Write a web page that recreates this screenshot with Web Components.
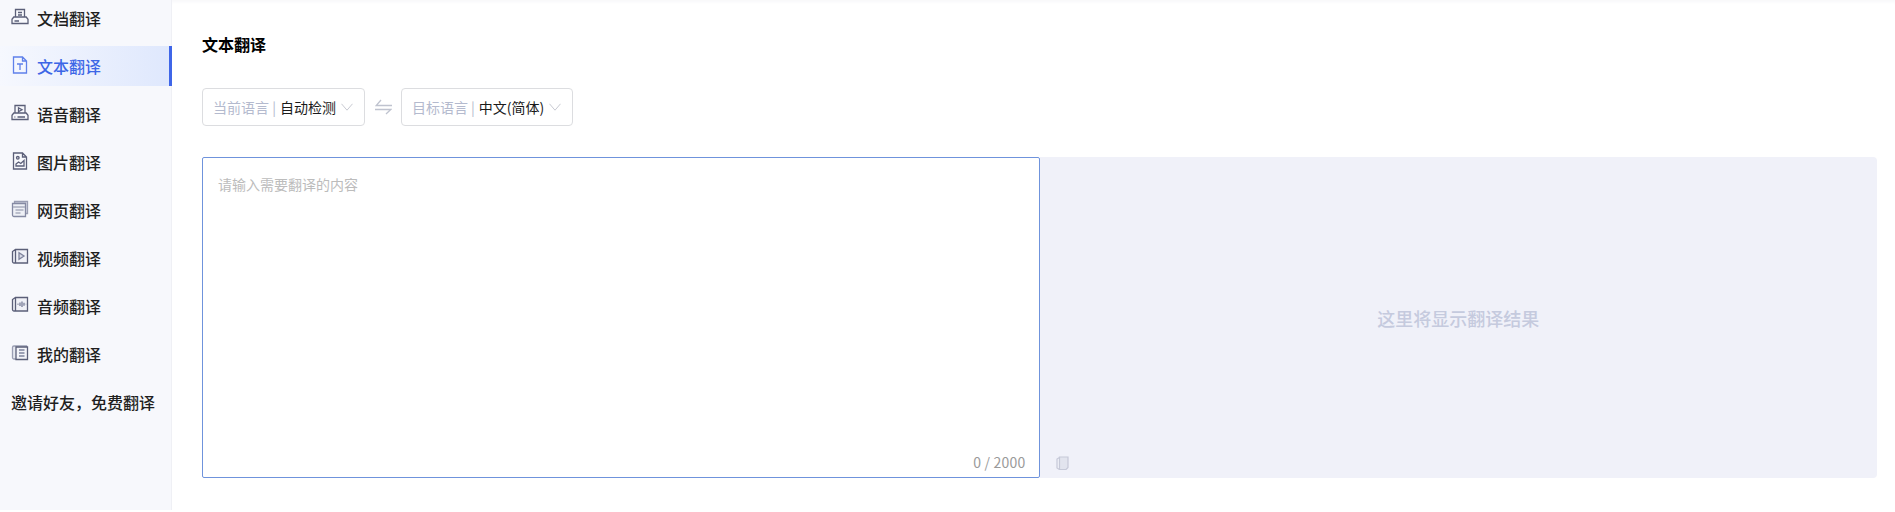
<!DOCTYPE html>
<html lang="zh-CN">
<head>
<meta charset="UTF-8">
<title>文本翻译</title>
<style>
    html, body { margin: 0; height: 100%; overflow: hidden; }
    body { font-family: "Noto Sans CJK SC", "Noto Sans", sans-serif; background: #fff; }
</style>
</head>
<body>
<translate-app>
    <side-menu slot="side">
        <menu-item icon="doc">文档翻译</menu-item>
        <menu-item icon="text" active>文本翻译</menu-item>
        <menu-item icon="audio">语音翻译</menu-item>
        <menu-item icon="image">图片翻译</menu-item>
        <menu-item icon="web">网页翻译</menu-item>
        <menu-item icon="video">视频翻译</menu-item>
        <menu-item icon="sound">音频翻译</menu-item>
        <menu-item icon="mine">我的翻译</menu-item>
        <menu-item>邀请好友，免费翻译</menu-item>
    </side-menu>
    <text-translate slot="main"></text-translate>
</translate-app>

<script>
    const ICONS = {
        doc: '<path d="M4.5 9V1.5h9V9M7 4.5h4M7 7h4M1 15.5v-4.2L2.8 9h12.4l1.8 2.3v4.2zM3.5 13H8"/>',
        text: '<path d="M2.5 1h9L15.5 5v12h-13zM11.5 1v4h4M6 8h6M9 8v6" />',
        audio: '<path d="M4 9V1.5h10V9M7.5 3.8v3.9l3.5-2zM1 15.5v-4.2L2.8 9h12.4l1.8 2.3v4.2zM3.5 13h.8M6.5 13H14"/>',
        image: '<path d="M2.5 1h9L15.5 5v12h-13zM11.5 1v4h4M5 14h8V8.5l-3.2 3-2.2-1.5L5 12z"/><circle cx="6.8" cy="5.8" r="1.3"/>',
        web: '<path fill="#e3e5ee" stroke="#9a9eb3" d="M3.5 1.5h13v12h-2V3.5h-11z"/><path fill="#eef0f6" stroke="#858aa3" d="M1.5 3.5h13v13H3a1.5 1.5 0 0 1-1.5-1.5z"/><path stroke="#a9adbe" d="M2 7h12M4.5 10h8M4.5 13h5"/>',
        video: '<path fill="#f0f1f7" d="M4.5 1.5h12v13.5H3A1.5 1.5 0 0 1 1.5 13.5V3.5L4.5 1.5zM4.5 1.5V15"/><path fill="#d9dbe6" stroke="#7f849d" d="M8 4.8v6.4l5-3.2z"/>',
        sound: '<path fill="#f0f1f7" d="M4.5 1.5h12v13.5H3A1.5 1.5 0 0 1 1.5 13.5V3.5L4.5 1.5zM4.5 1.5V15"/><path stroke-width="1.4" stroke="#7f849d" d="M6.5 8.3h1M9 6.5v3.6M11 5.5v5.6M13 6.8v3M14.8 8.3h.4"/>',
        mine: '<path fill="#e6e8f0" stroke="#9a9eb3" d="M3 2h12.5v13H3A1.5 1.5 0 0 1 1.5 13.5v-10A1.5 1.5 0 0 1 3 2z"/><path fill="#f3f4f9" d="M5 3h11.5v12.5H5z"/><path stroke="#7f849d" d="M8 6h5.5M8 9h5.5M8 12h5.5"/>'
    };

    class TranslateApp extends HTMLElement {
        constructor() {
            super();
            this.attachShadow({ mode: 'open' });
            this.shadowRoot.innerHTML = `
                <style>
                    :host { display: flex; height: 100vh; overflow: hidden; }
                    .side { flex: 0 0 172px; }
                    .main { flex: 1; min-width: 0; box-shadow: inset 0 4px 4px -3px rgba(30, 40, 90, .05); }
                </style>
                <div class="side"><slot name="side"></slot></div>
                <div class="main"><slot name="main"></slot></div>`;
        }
    }

    class SideMenu extends HTMLElement {
        constructor() {
            super();
            this.attachShadow({ mode: 'open' });
            this.shadowRoot.innerHTML = `
                <style>
                    :host { display: block; height: 100%; box-sizing: border-box; background: #f7f8fc; border-right: 1px solid #eff0f5; }
                    .list { display: flex; flex-direction: column; gap: 8px; margin-top: -2px; }
                </style>
                <div class="list"><slot></slot></div>`;
        }
    }

    class MenuItem extends HTMLElement {
        constructor() {
            super();
            this.attachShadow({ mode: 'open' });
            const icon = ICONS[this.getAttribute('icon')];
            const svg = icon ? `<svg viewBox="0 0 18 18" width="18" height="18" fill="none" stroke="currentColor" stroke-width="1.3">${icon}</svg>` : '';
            this.shadowRoot.innerHTML = `
                <style>
                    :host { display: flex; align-items: center; gap: 8px; height: 40px; box-sizing: border-box; padding-left: 11px; font-size: 16px; font-weight: 500; color: #1f1f1f; white-space: nowrap; }
                    :host([active]) { color: #3d66e6; background: linear-gradient(90deg, #f6f8fe 0%, #dfe8fd 100%); border-right: 3px solid #3f66e8; margin-right: -1px; }
                    svg { flex: none; color: #5b5f78; margin-top: -2px; }
                    :host([active]) svg { color: #5f80ea; }
                </style>
                ${svg}<slot></slot>`;
        }
    }

    class LangSelect extends HTMLElement {
        constructor() {
            super();
            this.attachShadow({ mode: 'open' });
            this.shadowRoot.innerHTML = `
                <style>
                    :host { display: inline-flex; align-items: center; height: 38px; box-sizing: border-box; padding: 0 11px 0 10px; border: 1px solid #dcdde0; border-radius: 4px; font-size: 14px; white-space: nowrap; background: #fff; }
                    .label { color: #b4bace; }
                    .value { color: #1a1a1a; margin-left: 4px; }
                    svg { margin-left: 5px; }
                </style>
                <span class="label">${this.getAttribute('label')} |</span>
                <span class="value"><slot></slot></span>
                <svg viewBox="0 0 12 8" width="12" height="8" fill="none" stroke="#c8cad2" stroke-width="1"><path d="M.5 .8L6 7.2 11.5 .8"/></svg>`;
        }
    }

    class TextTranslate extends HTMLElement {
        constructor() {
            super();
            this.attachShadow({ mode: 'open' });
            this.shadowRoot.innerHTML = `
                <style>
                    :host { display: block; padding: 0 18px 0 30px; }
                    h1 { margin: 0; padding-top: 32px; height: 24px; line-height: 24px; font-size: 16px; font-weight: 700; color: #000; }
                    .langs { display: flex; align-items: center; margin-top: 32px; }
                    .swap { margin: 0 9px 0 10px; display: block; }
                    .panels { display: flex; margin-top: 31px; height: 321px; }
                    .input, .output { flex: none; width: 50%; position: relative; box-sizing: border-box; }
                    .input { border: 1px solid #6f93dc; border-radius: 2px; padding: 16px 15px; font-size: 14px; line-height: 20px; color: #bcbcbc; }
                    .count { position: absolute; right: 13px; bottom: 5px; font-size: 14px; color: #9a9a9a; letter-spacing: .2px; }
                    .output { background: #f0f1f9; border-radius: 0 4px 4px 0; display: flex; align-items: center; justify-content: center; font-size: 18px; font-weight: 500; color: #c5cade; }
                    .copy { position: absolute; left: 15px; bottom: 8px; }
                </style>
                <h1>文本翻译</h1>
                <div class="langs">
                    <lang-select label="当前语言">自动检测</lang-select>
                    <svg class="swap" viewBox="0 0 17 16" width="17" height="16" fill="none" stroke="#bfc3cf" stroke-width="1.3"><path d="M17 6.5H1.2L6 1M0 10.5h15.8L11 15"/></svg>
                    <lang-select label="目标语言">中文(简体)</lang-select>
                </div>
                <div class="panels">
                    <div class="input">请输入需要翻译的内容<span class="count">0 / 2000</span></div>
                    <div class="output">这里将显示翻译结果
                        <svg class="copy" viewBox="0 0 14 14" width="14" height="14" fill="#e2e4ee" stroke="#c6c9d8" stroke-width="1.2"><path d="M4.5 1H13v10.5L11 13.5H4.5z"/><path fill="none" d="M4.5 1.5L2 3v9L4.5 13.5"/></svg>
                    </div>
                </div>`;
        }
    }

    customElements.define('translate-app', TranslateApp);
    customElements.define('side-menu', SideMenu);
    customElements.define('menu-item', MenuItem);
    customElements.define('lang-select', LangSelect);
    customElements.define('text-translate', TextTranslate);
</script>
</body>
</html>
